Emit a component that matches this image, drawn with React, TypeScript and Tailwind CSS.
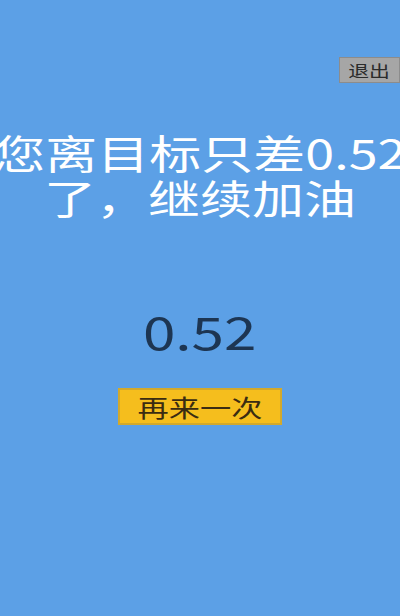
import React from "react";

export default function App() {
  return (
    <div className="w-[400px] h-[616px] bg-[#5ca0e6] overflow-hidden flex flex-col font-['Noto_Sans_CJK_SC','Noto_Sans',sans-serif]">
      <div className="flex justify-end pt-[57px]">
        <button className="h-[26px] w-[61px] bg-[#a6a6a6] border border-[#8c8c8c] flex items-center justify-center text-[16px] leading-none text-[#2b2b2b]">
          <span className="inline-block scale-x-[1.3] whitespace-nowrap">退出</span>
        </button>
      </div>
      <div className="mt-[47px] text-white text-[40px] leading-[45px] text-center">
        <div className="whitespace-nowrap">
          <span className="inline-block scale-x-[1.3] whitespace-nowrap">您离目标只差0.52</span>
        </div>
        <div className="whitespace-nowrap">
          <span className="inline-block scale-x-[1.3] whitespace-nowrap">了，继续加油</span>
        </div>
      </div>
      <div className="mt-[88px] text-center text-[45px] leading-[46px] text-[#1d3552]">
        <span className="inline-block scale-x-[1.3]">0.52</span>
      </div>
      <div className="mt-[34px] flex justify-center">
        <button className="w-[164px] h-[37px] bg-[#f5be1d] border-2 border-[#d2a92c] flex items-center justify-center text-[24px] leading-none text-[#3a2c12]">
          <span className="inline-block scale-x-[1.3] whitespace-nowrap">再来一次</span>
        </button>
      </div>
    </div>
  );
}
